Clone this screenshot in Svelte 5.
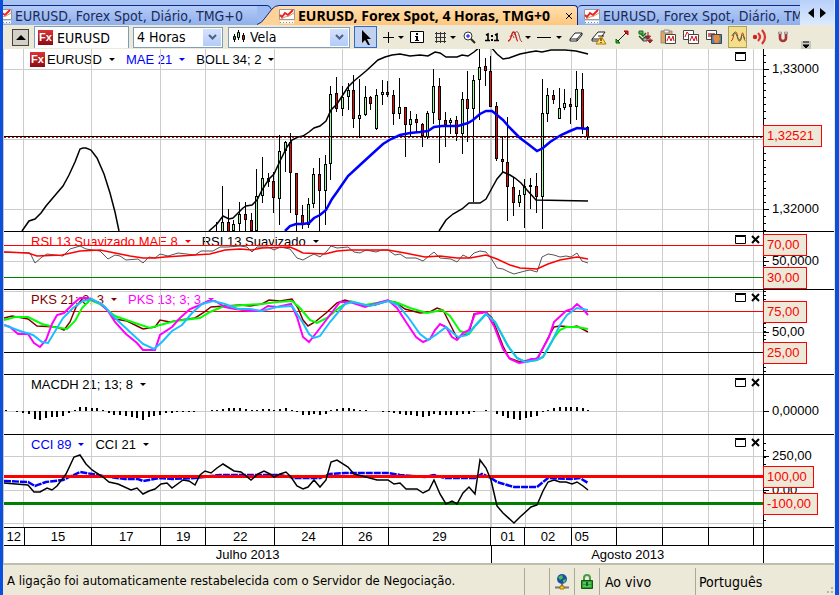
<script>
    const tools = [
        {
            name: 'Ponteiro',
            active: true,
            icon: '<path d="M5 1v13l3-3 3 5h2l-3-6h4z" fill="#000"/>'
        },
        {
            name: 'Mira',
            menu: true,
            icon: '<path d="M8.500 3v11M3 8.500h11" stroke="#000" fill="none"/>'
        },
        {
            name: 'Info',
            icon: '<path d="M1.500 2.500h13v11h-13z" fill="#fff" stroke="#000"/><path d="M7 4h2v2h-2zM6 7h3v4h1v1H6v-1h1V8H6z"/>'
        },
        {
            name: 'Grelha',
            menu: true,
            icon: '<path d="M4.500 3v11M8.500 3v11M12.500 3v11M3 4.500h11M3 8.500h11M3 12.500h11" stroke="#333" fill="none"/>'
        },
        {
            name: 'Zoom',
            icon: '<circle cx="7" cy="7" r="4" fill="#fff" stroke="#333"/><path d="M5 7h4M7 5v4" stroke="#00f"/><path d="M10 10l4 4" stroke="#222" stroke-width="2"/>'
        },
        {
            name: 'Escala 1:1',
            icon: '<path d="M2 6l2-1v7M11 6l2-1v7M1 11.500h5M10 11.500h5" stroke="#000" stroke-width="1.600" fill="none"/><path d="M7 6h2v2H7zM7 10h2v2H7z"/>'
        },
        {
            name: 'Indicadores',
            menu: true,
            icon: '<path d="M1 12C5 12 4 3 6.500 3S9 12 11 12" stroke="#d11" fill="none" stroke-width="1.300"/><path d="M3 8c1-3 3-2 4 1M7 6c2-5 4-4 5 0s1 5 3 7" stroke="#844" fill="none"/>'
        },
        {
            name: 'Linha',
            menu: true,
            wide: true,
            icon: '<path d="M1 8.500h14" stroke="#000"/>'
        },
        {
            name: 'Apagar',
            icon: '<path d="M2 10l5-6h7l-5 6zM2 10v2h7v-2M9 12l5-6V4" fill="#fff" stroke="#222"/>'
        },
        {
            name: 'Apagar tudo',
            icon: '<path d="M1 10l6-7h7l-5 7zM1 10v2h7M7 7h6" fill="#fff" stroke="#222"/><path d="M10 7l5 8H5z" fill="#fd6" stroke="#b70"/><path d="M10 9v3M10 13v1" stroke="#000"/>'
        },
        {
            name: 'Segmento',
            icon: '<path d="M4 12l8-8" stroke="#222"/><path d="M10 2h4v4z" fill="#d22" stroke="#a00"/><path d="M2 10v4h4z" fill="#2b2" stroke="#060"/>'
        },
        {
            name: 'Sinais',
            icon: '<path d="M2 3l4 4 3-3M2 7l4 4 3-4" stroke="#186018" stroke-width="1.500" fill="none"/><path d="M2 2h4v3H2z" fill="#4b4" stroke="#262"/><path d="M6 9h4v3H6z" fill="#bbb" stroke="#444"/><path d="M11 3v6M8.500 7l2.500 3 2.500-3zM13 9v4M10.500 11l2.500 3 2.500-3z" fill="#c22" stroke="#822"/>'
        },
        {
            name: 'Colar',
            icon: '<path d="M1 2h11v12H1z" fill="#d9a766" stroke="#a87"/><path d="M4 1h5v3H4z" fill="#eee" stroke="#888"/><path d="M5.500 5.500h10v9h-10z" fill="#fff" stroke="#444"/><path d="M7 12l2-5 2 5 2-5 1 5" stroke="#c11" fill="none"/>'
        },
        {
            name: 'Copiar',
            icon: '<path d="M.500 1.500h10v9H.500z" fill="#fff" stroke="#444"/><path d="M2 8l2-5 3 4" stroke="#c11" fill="none"/><path d="M5.500 5.500h10v9h-10z" fill="#fff" stroke="#444"/><path d="M7 12l2-5 2 5 2-5 1 5" stroke="#c11" fill="none"/>'
        },
        {
            name: 'Imagem',
            icon: '<path d="M.500 1.500h10v9H.500z" fill="#fff" stroke="#444"/><path d="M2 4h7v4H2z" fill="#c66"/><path d="M5.500 5.500h10v9h-10z" fill="#4c83b5" stroke="#444"/><path d="M8 6h5l1 4-2 4H9L7 9z" fill="#e58b3a"/>'
        },
        {
            name: 'Onda',
            marked: true,
            icon: '<path d="M1 12C4 11 3 3 5.500 3S7 12 9.500 12 11 4 12.500 4s1 7 3 8" stroke="#c22" fill="none"/><path d="M2 7c2-5 4-3 5 0s3 6 4 2 2-3 4 1" stroke="#274" fill="none"/>'
        },
        {
            name: 'Alertas',
            icon: '<circle cx="3" cy="8" r="2.200" fill="#c22"/><path d="M6 4q4 4 0 8M10 1q6 7 0 14" stroke="#d33" stroke-width="2.200" fill="none"/>'
        },
        {
            name: 'Magneto',
            icon: '<path d="M5 3v6a3 3 0 0 0 6 0V3" stroke="#a33" stroke-width="2.600" fill="none"/><path d="M3.500 3h3v2h-3zM9.500 3h3v2h-3z" fill="#ccc" stroke="#777" stroke-width=".5"/>'
        }
    ];

    const grid = [23.5, 91.5, 160.5, 205.5, 274.5, 342.5, 388.5, 525.5, 571.5, 616.5, 662.5, 708.5, 753.5];

    // x, high, low, body top, body bottom, up
    const candles = [
        [216.5, 222, 231, 226, 226, 0], [222.5, 186, 231, 222, 232, 1], [228.5, 209, 231, 222, 232, 0],
        [233.5, 220, 231, 224, 231, 1], [239.5, 202, 231, 214, 224, 1], [245.5, 202, 231, 214, 220, 0],
        [251.5, 213, 231, 220, 231, 0], [256.5, 169, 231, 196, 231, 1], [262.5, 157, 203, 178, 196, 1],
        [268.5, 173, 187, 178, 182, 0], [273.5, 172, 213, 181, 198, 0], [279.5, 135, 225, 151, 199, 1],
        [285.5, 141, 172, 142, 151, 1], [290.5, 133, 213, 142, 173, 0], [296.5, 173, 231, 173, 215, 0],
        [302.5, 205, 229, 215, 225, 0], [308.5, 198, 228, 204, 225, 1], [313.5, 168, 208, 174, 204, 1],
        [319.5, 158, 231, 174, 191, 0], [325.5, 155, 225, 164, 191, 1], [330.5, 86, 180, 94, 164, 1],
        [336.5, 77, 112, 93, 109, 0], [342.5, 86, 116, 97, 109, 1], [348.5, 83, 110, 90, 97, 1],
        [353.5, 75, 128, 90, 119, 0], [359.5, 79, 138, 115, 119, 1], [365.5, 86, 116, 97, 115, 1],
        [370.5, 96, 110, 97, 104, 0], [376.5, 89, 130, 95, 129, 1], [382.5, 80, 105, 92, 95, 1],
        [387.5, 81, 97, 92, 95, 0], [393.5, 90, 125, 95, 114, 0], [399.5, 78, 119, 107, 114, 1],
        [405.5, 107, 157, 107, 125, 0], [410.5, 111, 137, 119, 125, 1], [416.5, 114, 133, 119, 123, 0],
        [422.5, 123, 147, 124, 136, 0], [427.5, 111, 139, 113, 137, 1], [433.5, 69, 124, 86, 113, 1],
        [439.5, 78, 163, 86, 120, 0], [445.5, 112, 147, 120, 125, 0], [450.5, 118, 134, 120, 123, 1],
        [456.5, 116, 141, 120, 134, 0], [462.5, 92, 154, 99, 134, 1], [467.5, 71, 142, 99, 109, 0],
        [473.5, 75, 202, 80, 109, 1], [479.5, 48, 120, 67, 80, 1], [485.5, 58, 86, 66, 71, 0],
        [490.5, 56, 107, 71, 107, 0], [496.5, 102, 161, 106, 159, 0], [502.5, 137, 172, 159, 162, 0],
        [507.5, 117, 221, 162, 187, 0], [513.5, 178, 216, 187, 203, 0], [519.5, 190, 207, 195, 203, 1],
        [524.5, 179, 228, 186, 195, 1], [530.5, 178, 209, 185, 187, 1], [536.5, 173, 213, 186, 197, 0],
        [542.5, 79, 229, 113, 197, 1], [547.5, 88, 122, 95, 114, 1], [553.5, 90, 104, 95, 100, 0],
        [559.5, 88, 119, 108, 119, 1], [564.5, 89, 110, 103, 108, 1], [570.5, 98, 124, 104, 107, 0],
        [576.5, 71, 120, 89, 107, 1], [582.5, 73, 134, 89, 128, 0], [587.5, 126, 140, 127, 137, 0]
    ];

    const macd = [
        1, 0, -1, -2, -3, -8, -9, -7, -6, -6, -5, -2, 1, 4, 4, 3, 3, 1, -2, -4, -4, -5, -6, -7, -9, -6,
        -5, -4, -2, -2, -1, -1, -1, -1, 0, 0, 1, 1, 2, 3, 3, 3, 2, 1, 1, 2, 2, 1, 2, 3, 1, -1, -4, -4,
        -3, -4, -3, 1, 2, 3, 3, 2, 1, 1, 0, 0, -1, -1, -2, -3, -4, -4, -5, -6, -5, -3, -4, -4, -4, -4,
        -3, -3, -1, 0, 1, 0, -3, -5, -7, -8, -9, -7, -6, -5, -1, 1, 3, 4, 4, 4, 4, 3, 1
    ];

    function ticks(from, to, step) {
        const list = [];
        for (let y = from; y < to; y += step) {
            list.push(y);
        }
        return list;
    }

    // every panel draws in one shared vertical scale, starting at its own top
    const panels = [
        {
            id: 'price',
            top: 49,
            height: 182,
            legend: [
                { text: 'EURUSD', color: '#000', logo: true },
                { text: 'MAE 21', color: '#00f' },
                { text: 'BOLL 34; 2', color: '#000' }
            ],
            rows: [69.5, 139.5, 209.5],
            levels: [{ y: 136.5, color: '#000', width: 1 }],
            series: [
                { color: '#000', width: 1.5, points: '22,231 29,221 35,219 41,213 46,206 57,193 63,186 69,175 75,162 80,149 83,148 86,148 91,150 97,158 104,174 110,193 115,212 119,231' },
                { color: '#000', width: 1.5, points: '209,231 217,224 223,216 229,219 233,218 239,212 243,208 246,206 252,205 257,200 262,190 269,179 274,174 280,161 287,147 292,140 298,137 303,136 309,132 314,128 320,126 326,121 331,110 337,104 348,87 354,81 366,71 378,60 385,57 392,55 400,54 410,56 420,55 428,56 435,52 440,53 446,57 457,57 462,55 468,56 474,52 480,47 491,47 497,54 503,59 509,58 520,54 530,52 536,51 542,52 551,50 565,50 576,51 588,54' },
                { color: '#000', width: 1.5, points: '439,231 446,220 453,214 462,209 469,203 480,203 486,199 492,188 497,179 503,172 510,175 515,178 521,183 527,190 536,200 588,201' },
                { color: '#00f', width: 2.5, points: '285,231 290,226 296,224 303,224 309,223 314,218 320,215 326,210 332,199 337,192 348,176 360,165 372,154 383,144 391,139 400,135 410,133 420,132 428,131 434,127 442,126 458,126 468,123 473,120 480,114 486,111 492,111 497,115 503,120 509,127 515,133 520,138 528,144 537,151 543,148 550,142 561,135 570,131 577,128 588,129' }
            ],
            minor: ticks(55.5, 231, 7),
            labels: [{ y: 69, text: '1,33000' }, { y: 209, text: '1,32000' }],
            badges: [{ y: 136, text: '1,32521', width: 58 }]
        },
        {
            id: 'rsi',
            top: 232,
            height: 57,
            closable: true,
            legend: [
                { text: 'RSI 13 Suavizado MAE 8', color: '#f00' },
                { text: 'RSI 13 Suavizado', color: '#000' }
            ],
            rows: [261.5],
            levels: [
                { y: 245.5, color: '#f00', width: 1 },
                { y: 277.5, color: '#008000', width: 1 }
            ],
            series: [
                { color: '#555', width: 1, points: '4,252 30,253 35,263 42,257 47,254 63,256 70,249 80,246 86,249 100,251 108,259 115,255 120,256 126,260 138,259 143,263 149,257 155,258 160,254 168,256 178,253 195,255 201,251 213,251 220,247 228,247 240,246 247,247 252,252 257,247 268,247 274,250 280,247 290,249 297,258 303,260 310,256 314,254 320,257 327,251 331,246 337,248 348,247 354,252 360,253 366,250 376,252 382,250 388,250 395,255 400,254 406,258 416,258 423,261 429,256 434,252 440,258 451,259 457,262 463,255 469,258 474,253 480,251 486,252 491,258 497,268 503,269 509,272 514,274 525,271 530,270 537,272 542,257 548,254 554,255 560,257 566,256 571,257 577,253 582,261 588,263' },
                { color: '#f00', width: 1.5, points: '4,252 28,253 37,256 62,255 80,251 100,250 115,253 130,256 143,258 155,258 165,257 195,255 210,254 225,250 240,249 252,250 262,248 290,247 297,250 303,253 325,254 337,251 350,250 388,250 405,253 425,257 440,256 457,258 470,258 486,255 497,259 510,265 520,268 537,269 548,264 560,260 577,257 588,259' }
            ],
            minor: ticks(237.5, 289, 4),
            labels: [{ y: 261, text: '50,0000' }],
            badges: [{ y: 245, text: '70,00', width: 43 }, { y: 278, text: '30,00', width: 43 }]
        },
        {
            id: 'pks',
            top: 290,
            height: 84,
            closable: true,
            legend: [
                { text: 'PKS 21; 3; 3', color: '#800000' },
                { text: 'PKS 13; 3; 3', color: '#f0f' }
            ],
            rows: [291.5, 332.5],
            levels: [
                { y: 311.5, color: '#f00', width: 1 },
                { y: 352.5, color: '#000', width: 1 }
            ],
            series: [
                { color: '#800000', width: 1.5, points: '4,318 12,316 28,319 37,326 57,327 64,330 70,322 76,307 82,299 86,298 97,302 105,307 115,319 127,321 137,326 143,329 155,327 160,320 170,322 180,320 195,318 203,313 211,307 225,306 240,305 250,306 262,304 269,300 280,301 292,299 298,308 303,320 308,326 315,322 326,313 337,303 345,300 365,306 375,305 388,301 395,302 405,309 420,313 430,312 437,308 443,310 450,324 457,338 469,333 474,314 486,312 492,318 503,346 509,358 520,362 538,358 549,336 554,327 560,326 572,327 577,326 588,332' },
                { color: '#0f0', width: 2, points: '4,320 15,317 28,317 42,324 54,327 67,329 75,321 82,308 90,300 100,304 115,316 135,323 150,328 160,325 175,321 200,318 210,312 222,307 245,305 262,304 277,302 292,301 300,308 310,320 317,323 327,318 340,307 350,301 365,305 388,301 398,303 410,308 427,313 442,310 450,316 460,331 469,334 475,326 486,314 495,322 508,346 517,358 525,362 537,360 543,357 554,338 560,330 566,327 577,327 588,329' },
                { color: '#f0f', width: 2, points: '4,325 10,327 18,334 28,334 34,343 40,347 46,340 52,324 57,315 64,313 74,303 80,298 88,298 100,303 108,311 115,322 126,334 137,343 143,350 155,350 160,335 172,327 180,318 190,309 200,305 208,301 215,301 225,307 235,309 250,311 260,311 268,306 277,307 291,304 297,317 303,337 309,342 317,332 330,315 340,302 350,302 365,307 378,303 388,300 397,308 406,322 416,337 423,342 430,339 435,330 440,324 446,327 452,337 457,340 463,333 469,330 475,314 486,312 494,326 503,349 510,359 519,363 525,362 531,359 537,359 549,337 554,322 566,311 572,309 577,304 583,309 588,315' },
                { color: '#19c0ff', width: 2, points: '4,325 20,331 33,335 42,342 48,343 54,333 63,318 73,308 83,301 92,299 103,305 115,318 130,332 143,344 154,349 162,342 172,331 182,325 192,313 202,304 213,301 225,304 238,309 250,309 262,311 277,307 292,306 303,323 309,334 314,338 320,336 330,322 345,304 353,302 370,306 388,301 398,305 408,317 420,334 428,340 437,334 446,327 453,333 458,337 467,335 475,326 486,314 495,322 508,346 517,358 525,362 537,360 543,357 552,341 560,325 567,315 577,308 588,310' }
            ],
            minor: ticks(291.5, 374, 4),
            labels: [{ y: 332, text: '50,00' }],
            badges: [{ y: 312, text: '75,00', width: 43 }, { y: 353, text: '25,00', width: 43 }]
        },
        {
            id: 'macd',
            top: 375,
            height: 59,
            closable: true,
            legend: [{ text: 'MACDH 21; 13; 8', color: '#000' }],
            rows: [411.5],
            levels: [],
            series: [],
            minor: [],
            labels: [{ y: 411, text: '0,00000' }],
            badges: []
        },
        {
            id: 'cci',
            top: 435,
            height: 92,
            closable: true,
            legend: [
                { text: 'CCI 89', color: '#00f' },
                { text: 'CCI 21', color: '#000' }
            ],
            rows: [456.5, 490.5, 523.5],
            series: [
                { color: '#00f', width: 2.5, dash: '7 1', points: '4,481 28,482 35,486 46,482 63,480 80,472 92,474 103,476 125,479 138,479 143,481 160,478 172,479 195,478 220,475 257,475 280,475 295,478 320,478 330,474 345,473 388,473 400,475 425,477 434,475 445,478 475,478 482,474 491,478 497,482 514,487 537,487 548,478 571,479 580,478 588,483' }
            ],
            levels: [
                { y: 476.5, color: '#f00', width: 3 },
                { y: 503.5, color: '#008000', width: 3 }
            ],
            over: '4,483 28,485 34,492 40,492 47,488 52,490 57,486 66,474 74,457 80,455 86,464 92,470 103,477 109,482 118,484 131,490 137,488 143,494 149,491 155,489 161,484 167,483 172,488 183,480 189,481 195,485 200,475 205,471 211,473 217,468 223,464 234,471 241,472 251,480 258,474 264,471 270,474 274,477 280,474 286,472 291,477 297,486 303,489 308,487 314,480 320,487 326,480 331,462 337,460 348,467 354,474 366,477 377,480 388,480 394,484 400,483 406,489 417,489 423,493 429,490 434,480 440,494 446,504 452,501 457,504 463,493 469,487 475,494 480,460 486,468 491,480 497,506 503,513 514,523 520,517 531,507 537,505 543,491 548,482 554,480 560,482 566,482 572,484 577,482 583,486 588,490',
            minor: ticks(443.5, 527, 7),
            labels: [{ y: 456, text: '250,00' }, { y: 490, text: '0,00' }],
            badges: [{ y: 477, text: '100,00', width: 50 }, { y: 504, text: '-100,00', width: 54 }]
        }
    ];

    const days = [
        { label: '12', span: 20 },
        { label: '15', span: 68 },
        { label: '17', span: 69 },
        { label: '19', span: 45 },
        { label: '22', span: 69 },
        { label: '24', span: 68 },
        { label: '26', span: 46 },
        { label: '29', span: 103 },
        { label: '01', span: 34 },
        { label: '02', span: 46 },
        { label: '05', span: 21, open: true },
        { label: '', span: 24 },
        { label: '', span: 46 },
        { label: '', span: 46 },
        { label: '', span: 45 },
        { label: '', span: 9, open: true }
    ];

    let symbol = 'EURUSD';
    let period = '4 Horas';
    let style = 'Vela';
</script>

{#snippet chartIcon()}
    <svg class="chart-icon" width="16" height="16" viewBox="0 0 16 16">
        <path d="M.5 1.500h15v10H.5z" fill="#fff" stroke="#999" />
        <path d="M1 12.500h14v3H1z" fill="#fff" />
        <path d="M1 14.500h1M4 14.500h1M7 14.500h1M10 14.500h1M13 14.500h1" stroke="#888" />
        <path d="M1 7l2 2 3-4 3 2 5-5" fill="none" stroke="#e22" stroke-width="2" />
        <path d="M2 11l4-2 4-1 5-3" fill="none" stroke="#c96" />
    </svg>
{/snippet}

{#snippet fxLogo()}
    <span class="fx">Fx</span>
{/snippet}

<div class="window">
    <div class="tabs">
        <button class="tab first">{@render chartIcon()}<span>EURUSD, Forex Spot, Diário, TMG+0</span></button>
        <svg class="edge" width="22" height="20" viewBox="0 0 22 20">
            <path d="M0 0H10Q14 0 14 4V20H0z" fill="#9dbbf0" />
            <path d="M0 20Q5 18 8 13L15 4Q18 .5 22 .5V20z" fill="#ffd397" />
            <path d="M0 .5H10Q13 .5 14 4M0 19.500Q5 18 8 13L15 4Q18 .5 22 .5" fill="none" stroke="#0a2a8c" />
        </svg>
        <button class="tab current">{@render chartIcon()}<span>EURUSD, Forex Spot, 4 Horas, TMG+0</span><svg class="close" width="8" height="8"><path d="M1 1l6 6M7 1L1 7" stroke="#000" /></svg></button>
        <button class="tab last">{@render chartIcon()}<span>EURUSD, Forex Spot, Diário, TMG+0</span></button>
        <div class="scroll">
            <button aria-label="Anterior"><svg width="6" height="10"><path d="M6 0v10L0 5z" /></svg></button>
            <button aria-label="Seguinte"><svg width="6" height="10"><path d="M0 0v10l6-5z" /></svg></button>
        </div>
    </div>

    <div class="toolbar">
        <button class="collapse" aria-label="Recolher"><svg width="10" height="5"><path d="M0 5h10L5 0z" /></svg></button>
        <label class="symbol">
            {@render fxLogo()}
            <input type="text" aria-label="Símbolo" bind:value={symbol}>
        </label>
        <label class="combo period">
            <select aria-label="Período" bind:value={period}>
                <option>4 Horas</option>
                <option>Diário</option>
            </select>
            <span class="drop"><svg width="9" height="6"><path d="M1 1l3.500 3.500L8 1" fill="none" stroke="#4d6185" stroke-width="2" /></svg></span>
        </label>
        <label class="combo type">
            <svg width="14" height="14" viewBox="0 0 14 14">
                <path d="M2.500 4v8M6.500 0v10M11.500 3v9" stroke="#000" />
                <path d="M1.500 6.500h2v3h-2z" fill="#3a3" stroke="#000" />
                <path d="M5.500 2.500h2v5h-2z" fill="#8d8" stroke="#000" />
                <path d="M10.500 5.500h2v4h-2z" fill="#d22" stroke="#000" />
            </svg>
            <select aria-label="Tipo de gráfico" bind:value={style}>
                <option>Vela</option>
                <option>Linha</option>
            </select>
            <span class="drop"><svg width="9" height="6"><path d="M1 1l3.500 3.500L8 1" fill="none" stroke="#4d6185" stroke-width="2" /></svg></span>
        </label>
        <div class="tools">
            {#each tools as tool}
                <button class:active={tool.active} class:marked={tool.marked} class:menu={tool.menu} class:wide={tool.wide} aria-label={tool.name}>
                    <svg width="16" height="16" viewBox="0 0 16 16">{@html tool.icon}</svg>
                    {#if tool.menu}
                        <svg class="caret" width="6" height="3"><path d="M0 0h6L3 3z" /></svg>
                    {/if}
                </button>
            {/each}
        </div>
        <button class="more" aria-label="Mais"><svg width="10" height="8"><path d="M2 1h6M2 4h6L5 7z" stroke="#000" /></svg></button>
    </div>

    <div class="chart">
        {#each panels as panel}
            <div class="panel" style="height: {panel.height}px">
                <div class="plot">
                    <div class="legend" class:price={panel.id === 'price'}>
                        {#each panel.legend as item}
                            <button style="color: {item.color}">
                                {#if item.logo}{@render fxLogo()}{/if}
                                <span>{item.text}</span>
                                <svg width="6" height="3"><path d="M0 0h6L3 3z" fill="currentColor" /></svg>
                            </button>
                        {/each}
                    </div>
                    <svg class="drawing" viewBox="4 {panel.top} 759 {panel.height}" preserveAspectRatio="none">
                        <g class="grid">
                            {#each grid as x}
                                <line x1={x} x2={x} y1={panel.top} y2={panel.top + panel.height} />
                            {/each}
                            <line class="month" x1="491" x2="491" y1={panel.top} y2={panel.top + panel.height} />
                            {#each panel.rows as y}
                                <line x1="4" x2="763" y1={y} y2={y} />
                            {/each}
                        </g>
                        {#if panel.id === 'price'}
                            {#each candles as [x, high, low, top, bottom, up]}
                                <line x1={x} x2={x} y1={high} y2={low} stroke="#000" />
                                <rect x={x - 1} y={top + 0.5} width="2" height={Math.max(bottom - top - 1, 0)} fill={up ? '#9f9' : '#f00'} stroke="#000" />
                            {/each}
                            <line x1="4" x2="763" y1="137.5" y2="137.5" stroke="#d00" stroke-dasharray="2 2" />
                        {/if}
                        {#if panel.id === 'macd'}
                            {#each macd as value, i}
                                {#if value}
                                    <rect x={Math.round(5 + i * 5.71)} y={value > 0 ? 411 - value : 411} width="2" height={Math.abs(value)} />
                                {/if}
                            {/each}
                        {/if}
                        {#if panel.id !== 'cci'}
                            {#each panel.levels as level}
                                <line x1="4" x2="763" y1={level.y} y2={level.y} stroke={level.color} stroke-width={level.width} />
                            {/each}
                        {/if}
                        {#each panel.series as line}
                            <polyline points={line.points} stroke={line.color} stroke-width={line.width} stroke-dasharray={line.dash} />
                        {/each}
                        {#if panel.id === 'cci'}
                            {#each panel.levels as level}
                                <line x1="4" x2="763" y1={level.y} y2={level.y} stroke={level.color} stroke-width={level.width} />
                            {/each}
                            <polyline points={panel.over} stroke="#000" stroke-width="1.5" />
                        {/if}
                    </svg>
                    <div class="controls">
                        <button aria-label="Maximizar"><svg width="11" height="9"><path d="M.5 1.500h10v7H.5zM0 .5h11" fill="#fff" stroke="#000" /></svg></button>
                        {#if panel.closable}
                            <button aria-label="Fechar"><svg width="9" height="9"><path d="M1 1l7 7M8 1L1 8" stroke="#000" stroke-width="2" /></svg></button>
                        {/if}
                    </div>
                </div>
                <svg class="axis" viewBox="763 {panel.top} 71 {panel.height}">
                    <path d="M763.5 {panel.top}v{panel.height}" stroke="#000" />
                    {#each panel.minor as y}
                        <path d="M763 {y}h3" stroke="#000" />
                    {/each}
                    {#each panel.labels as label}
                        <path d="M763 {label.y + 0.5}h6" stroke="#000" />
                        <text x="772" y={label.y + 4}>{label.text}</text>
                    {/each}
                    {#each panel.badges as badge}
                        <rect x="763.5" y={badge.y - 10.5} width={badge.width} height="21" />
                        <text class="red" x="767" y={badge.y + 4}>{badge.text}</text>
                    {/each}
                </svg>
            </div>
        {/each}

        <div class="dates">
            <div class="days">
                {#each days as day}
                    <span class:open={day.open} style="flex-grow: {day.span}">{day.label}</span>
                {/each}
            </div>
            <div class="gutter"></div>
        </div>
        <div class="dates months">
            <div class="days">
                <span style="flex-grow: 488">Julho 2013</span>
                <span class="open" style="flex-grow: 271">Agosto 2013</span>
            </div>
            <div class="gutter"></div>
        </div>
    </div>

    <div class="status">
        <span class="message">A ligação foi automaticamente restabelecida com o Servidor de Negociação.</span>
        <span class="cell"></span>
        <span class="cell">
            <svg width="16" height="16" viewBox="0 0 16 16">
                <circle cx="8" cy="5" r="5" fill="#1c4fa8" />
                <path d="M4 3l4-2 1 3-3 2zM9 6l3-1-1 4-2-1z" fill="#4cc04c" />
                <path d="M8 10v3M1 13.500h14" stroke="#777" stroke-width="2" />
                <path d="M6 12h4v3H6z" fill="#fc3" stroke="#a70" />
            </svg>
        </span>
        <span class="cell">
            <svg width="14" height="16" viewBox="0 0 14 16">
                <path d="M4 7V4a3 3 0 0 1 6 0v3" fill="none" stroke="#4a9a4a" stroke-width="2" />
                <path d="M1.500 6.500h11v8h-11z" fill="#2c9c2c" stroke="#0a5a0a" />
                <path d="M3 9h8M3 12h8" stroke="#8fe08f" />
                <path d="M6 8h2v4H6z" fill="#063" />
            </svg>
        </span>
        <span class="cell mode">Ao vivo</span>
        <span class="cell language">Português</span>
        <svg class="grip" width="12" height="12"><path d="M9 2h2v2H9zM9 6h2v2H9zM9 10h2v2H9zM5 6h2v2H5zM5 10h2v2H5zM1 10h2v2H1z" fill="#b8b4a0" /></svg>
    </div>
</div>

<style>
    :global(body) {
        margin: 0;
    }

    .window {
        box-sizing: border-box;
        display: flex;
        flex-direction: column;
        min-height: 100vh;
        padding-right: 1px;

        font-family: 'DejaVu Sans Condensed', 'Noto Sans', sans-serif;
        font-size: 14px;
        color: #000;
        background: #ece9d8;
        border: solid #0a50e0;
        border-width: 0 4px 0 3px;
    }

    button {
        display: flex;
        align-items: center;
        padding: 0;

        font: inherit;
        color: inherit;
        background: none;
        border: 0;
    }

    .tabs {
        display: flex;
        align-items: flex-end;
        height: 25px;
        overflow: hidden;

        background: #a9c3f2;
    }
    .tab {
        flex: none;
        box-sizing: border-box;
        height: 20px;

        white-space: nowrap;
        color: #1a2a5a;
        background: linear-gradient(#b4cbf7, #8fb0ec);
        border-top: 1px solid #0a2a8c;
    }
    .tab span {
        margin-left: 3px;
    }
    .tab.first {
        width: 254px;
        overflow: hidden;
    }
    .tab.first .chart-icon {
        margin-left: -7px;
    }
    .tab.current {
        width: 299px;

        font-family: 'Noto Sans', sans-serif;
        font-weight: bold;
        color: #000;
        background: linear-gradient(#ffe0b0, #ffc67c);
        border-right: 1px solid #0a2a8c;
        border-radius: 0 4px 0 0;
    }
    .tab .close {
        margin-left: auto;
        margin-right: 4px;
    }
    .tab.last {
        flex: 1 1 0;
        min-width: 0;
        padding-left: 6px;
        overflow: hidden;

        border-radius: 4px 0 0 0;
    }
    .chart-icon {
        flex: none;
    }
    .edge {
        flex: none;
    }
    .scroll {
        display: flex;
        flex: none;
        gap: 6px;
        justify-content: center;
        width: 34px;
        height: 25px;

        background: linear-gradient(#b9d0fa, #dceafe);
    }

    .toolbar {
        display: flex;
        align-items: center;
        height: 24px;
        padding-left: 9px;
    }
    .collapse {
        justify-content: center;
        width: 17px;
        height: 17px;

        background: #d4d0c8;
        border: 1px solid #444;
    }
    .symbol {
        display: flex;
        align-items: center;
        box-sizing: border-box;
        width: 95px;
        height: 22px;
        margin-left: 5px;
        padding-left: 3px;

        background: #fff;
        border: 1px solid #7f9db9;
        border-bottom: 0;
    }
    .symbol input {
        width: 64px;
        margin-left: 4px;
        padding: 0;

        font: inherit;
        border: 0;
    }
    .fx {
        flex: none;
        width: 15px;

        font: bold 11px/15px 'Liberation Sans', sans-serif;
        text-align: center;
        color: #fff;
        background: linear-gradient(#d33, #8c0c14);
    }
    .combo {
        position: relative;
        display: flex;
        align-items: center;
        box-sizing: border-box;
        height: 21px;
        padding: 0 1px 0 3px;

        background: #fff;
        border: 1px solid #7f9db9;
    }
    .combo select {
        flex: 1;
        min-width: 0;
        padding: 0;

        font: inherit;
        appearance: none;
        background: none;
        border: 0;
    }
    .period {
        width: 90px;
        margin-left: 4px;
    }
    .type {
        width: 122px;
        margin-left: 5px;
    }
    .type select {
        margin-left: 4px;
    }
    .drop {
        display: flex;
        align-items: center;
        justify-content: center;
        width: 18px;
        height: 17px;

        pointer-events: none;
        background: linear-gradient(#d5e2fd, #b3cbf8);
    }
    .tools {
        display: flex;
        margin-left: 4px;
    }
    .tools button {
        flex: none;
        box-sizing: border-box;
        width: 23px;
        height: 22px;
        padding-left: 3px;
    }
    .tools .menu {
        width: 29px;
    }
    .tools .wide {
        width: 32px;
    }
    .tools .active {
        padding-left: 2px;

        background: #c1d2ee;
        border: 1px solid #316ac5;
    }
    .tools .marked {
        width: 19px;
        margin: 0 2px;
        padding-left: 1px;

        background: #f3e08c;
        border: 1px solid #a9a05c;
    }
    .tools .caret {
        margin-left: 2px;
    }
    .tools .wide .caret {
        margin-left: 4px;
    }
    .more {
        align-self: flex-end;
        margin-left: 6px;

        background: #c8c6bc;
    }

    .chart {
        font: 13px/17px 'Liberation Sans', sans-serif;
        background: #fff;
        border-left: 1px solid #c8c8c0;
        border-bottom: 2px solid #c0bdae;
    }
    .panel {
        display: flex;

        border-bottom: 1px solid #000;
    }
    .plot {
        position: relative;
        flex: 1;
        min-width: 0;
    }
    .drawing {
        position: absolute;
        inset: 0;
        width: 100%;
        height: 100%;

        pointer-events: none;
    }
    .drawing polyline {
        fill: none;
    }
    .grid line {
        stroke: #ccc;
    }
    .grid .month {
        stroke-width: 2;
    }
    .legend {
        position: absolute;
        top: 1px;
        left: 27px;
        display: flex;
        gap: 11px;
    }
    .legend.price {
        top: 2px;
    }
    .legend button {
        gap: 7px;
    }
    .legend .fx {
        margin: 0 -5px 0 -1px;
    }
    .controls {
        position: absolute;
        top: 3px;
        right: 3px;
        display: grid;
        grid-template-columns: 11px 9px;
        gap: 5px;
    }
    .axis {
        flex: none;
        width: 71px;
        height: 100%;
    }
    .axis text {
        font-size: 13px;
    }
    .axis .red {
        fill: #f00;
    }
    .axis rect {
        fill: #ece9d8;
        stroke: #f00;
    }

    .dates {
        display: flex;
        height: 17px;

        border-bottom: 1px solid #000;
    }
    .months {
        border-bottom: 0;
    }
    .days {
        display: flex;
        flex: 1;
    }
    .days span {
        box-sizing: border-box;
        flex: 0 1 0;
        min-width: 0;

        text-align: center;
        white-space: nowrap;
        border-right: 1px solid #000;
    }
    .days .open {
        border-right: 0;
    }
    .gutter {
        box-sizing: border-box;
        width: 71px;

        border-left: 1px solid #000;
    }

    .status {
        display: flex;
        flex: 1;
        min-height: 30px;
    }
    .status .message {
        flex: 1;
        padding-left: 4px;

        font-size: 13px;
        line-height: 32px;
        white-space: nowrap;
    }
    .cell {
        display: flex;
        align-items: center;
        justify-content: center;
        box-sizing: border-box;
        width: 25px;
        margin: 3px 0 1px;

        border-left: 1px solid #aca899;
    }
    .cell.mode {
        justify-content: flex-start;
        width: 96px;
        padding-left: 5px;
    }
    .cell.language {
        justify-content: flex-start;
        width: 127px;
        padding-left: 3px;
    }
    .grip {
        align-self: flex-end;
    }
</style>
